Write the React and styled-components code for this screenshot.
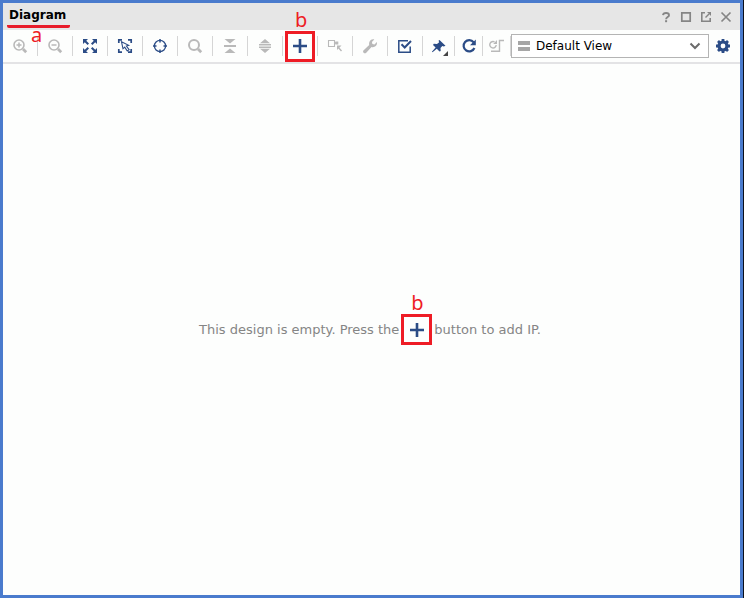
import React from "react";
import styled, { createGlobalStyle } from "styled-components";

const NAVY = "#2b4c86";
const GREY = "#b9b9b9";

const GlobalStyle = createGlobalStyle`
  *, *::before, *::after { box-sizing: border-box; }
  body {
    margin: 0;
    font-family: "DejaVu Sans", sans-serif;
    font-size: 12px;
    color: #000;
    background: #fdfdfd;
  }
`;

const Window = styled.div`
  min-height: 100vh;
  display: flex;
  border-right: 1px solid #0b0f18;
`;

const Panel = styled.main`
  flex: 1;
  min-width: 0;
  display: flex;
  flex-direction: column;
  border: 3px solid #4a7bcd;
  background: #fdfefd;
`;

const TitleBar = styled.header`
  display: flex;
  align-items: flex-start;
  justify-content: space-between;
  height: 27px;
  padding: 0 4px;
  background: #e6e6e6;
`;

const Title = styled.h1`
  position: relative;
  margin: 0;
  padding: 2px 4px 0 2px;
  font-size: 12px;
  line-height: 20px;
  font-weight: 700;
  border-bottom: 3px solid #e81c2a;
  border-radius: 2px;
`;

const WindowButtons = styled.div`
  display: flex;
  align-self: center;
`;

const WindowButton = styled.button`
  display: grid;
  place-items: center;
  width: 20px;
  height: 20px;
  padding: 0;
  border: 0;
  background: none;
  color: #858585;
`;

const Note = styled.span`
  position: absolute;
  left: ${(p) => p.$left}px;
  top: ${(p) => p.$top}px;
  font-family: "Noto Sans", sans-serif;
  font-size: 20px;
  line-height: 24px;
  font-weight: 400;
  color: #ee1c25;
  pointer-events: none;
`;

const Toolbar = styled.div`
  display: flex;
  align-items: center;
  height: 34px;
  border-bottom: 2px solid #e3e3e5;
`;

const ToolCell = styled.div`
  flex: none;
  display: flex;
  align-items: center;
  justify-content: center;
  width: ${(p) => p.$width || 35}px;
  height: 20px;
  border-right: 1px solid #d5d5d5;
`;

const ToolButton = styled.button`
  display: grid;
  place-items: center;
  padding: 0;
  border: 0;
  background: none;
  color: ${(p) => (p.disabled ? GREY : NAVY)};
`;

const MarkedButton = styled(ToolButton)`
  position: relative;
  flex: none;
  width: ${(p) => p.$size}px;
  height: 31px;
  border: 3px solid #ee1c25;
`;

const ViewPicker = styled.label`
  flex: 1;
  min-width: 0;
  display: grid;
  grid-template-columns: 24px 1fr 26px;
  align-items: center;
  justify-items: center;
  height: 24px;
  border: 1px solid #b4b4b4;
  background: #fff;
`;

const ViewSelect = styled.select`
  grid-area: 1 / 1 / 2 / 4;
  justify-self: stretch;
  height: 22px;
  padding: 0 26px 0 24px;
  border: 0;
  appearance: none;
  background: none;
  font: inherit;
  color: #000;
`;

const PickerIcon = styled.span`
  grid-area: 1 / ${(p) => p.$column};
  display: grid;
  pointer-events: none;
`;

const SettingsSlot = styled.div`
  flex: none;
  display: grid;
  place-items: center;
  width: 31px;
  padding-right: 3px;
`;

const Canvas = styled.section`
  flex: 1;
  display: flex;
  align-items: center;
  justify-content: center;
  padding-right: 3px;
  color: #858585;
`;

const Message = styled.p`
  display: flex;
  align-items: center;
  gap: 2px;
  margin: 0;
  font-size: 13px;
  line-height: 16px;
`;

const Icon = ({ children, size = 16 }) => (
  <svg width={size} height={size} viewBox={`0 0 ${size} ${size}`} fill="none" stroke="currentColor" aria-hidden="true">
    {children}
  </svg>
);

const Magnifier = ({ sign }) => (
  <Icon>
    <circle cx="7" cy="7" r="5" strokeWidth={sign ? 1.6 : 2} />
    <path d="M11 11l3.200 3.200" strokeWidth="2.8" />
    {sign && <path d={sign === "+" ? "M4.500 7h5M7 4.500v5" : "M4.500 7h5"} strokeWidth="1.5" />}
  </Icon>
);

const FitIcon = () => (
  <Icon>
    <path d="M1 1h5L1 6zM15 1v5l-5-5zM1 15v-5l5 5zM15 15h-5l5-5z" fill="currentColor" stroke="none" />
    <path d="M3 3l3.300 3.300M13 3L9.700 6.300M3 13l3.300-3.300M13 13L9.700 9.700" strokeWidth="2" />
  </Icon>
);

const FitSelectionIcon = () => (
  <Icon>
    <path d="M1.800 5V1.800H5M11 1.800h3.200V5M14.200 11v3.200H11M5 14.200H1.800V11" strokeWidth="1.7" />
    <path d="M4.500 3.800l1.500 7 1.700-1.600 2.600 3.800 1.800-1.300-2.700-3.600 2.300-.800z" strokeWidth="1.1" />
  </Icon>
);

const TargetIcon = () => (
  <Icon>
    <circle cx="8" cy="8" r="5.600" strokeWidth="1.3" />
    <path d="M8 1v3.500M8 11.500V15M1 8h3.500M11.500 8H15" strokeWidth="1.5" />
  </Icon>
);

const CollapseIcon = () => (
  <Icon>
    <path d="M2.500 1h11L8 5.500zM2.500 15h11L8 10.500z" fill="currentColor" stroke="none" />
    <path d="M2 8h12" strokeWidth="2" />
  </Icon>
);

const ExpandIcon = () => (
  <Icon>
    <path d="M3 5.200h10L8 1zM3 10.800h10L8 15z" fill="currentColor" stroke="none" />
    <path d="M2 6.800h12M2 9.300h12" strokeWidth="1.4" />
  </Icon>
);

const PlusIcon = () => (
  <Icon>
    <path d="M1 8h14M8 1v14" strokeWidth="2.6" />
  </Icon>
);

const ConnectIcon = () => (
  <Icon>
    <path d="M1.500 2.500h6v6h-6z" strokeWidth="1.1" />
    <path d="M7.500 5h2M10.500 8.500l4 4.500" strokeWidth="1.4" />
    <path d="M8.300 3.500h3v3h-3zM10 7.500h4.500L10 12z" fill="currentColor" stroke="none" />
  </Icon>
);

const WrenchIcon = () => (
  <Icon>
    <path d="M1.400 12.500L7.200 7C6.400 3.800 8.800.8 12.300 1.400L9.900 3.900l.5 2.100 2.100.4 2.400-2.400c.8 3.500-2.300 6-5.400 5L4 14.900c-1.500 1.200-3.800-.8-2.600-2.400z" fill="currentColor" stroke="none" />
  </Icon>
);

const ValidateIcon = () => (
  <Icon>
    <path d="M11 2.800H1.800v11.400h11.400V8.500" strokeWidth="1.5" />
    <path d="M4.500 6.300l3.200 3.200L14 3" strokeWidth="2" />
  </Icon>
);

const PinIcon = () => (
  <svg width="20" height="20" viewBox="0 0 20 20" aria-hidden="true">
    <path d="M10.500 4l6 5.800-1.700.8-1.500-.7-1.800 2 .2 3-1.200.7-2.700-2.800-4.300 3.500-.6-.6 3.700-4.300L4 9l.8-1.200 3.200.2 2.200-1.700-.7-1.500z" fill="currentColor" />
    <path d="M19 15v5h-5z" fill="#444" />
  </svg>
);

const RefreshIcon = () => (
  <Icon>
    <path d="M12.600 4.300A5.600 5.600 0 1 0 13.400 10" strokeWidth="2.2" />
    <path d="M14.800 1.500v5.700H9z" fill="currentColor" stroke="none" />
  </Icon>
);

const RerouteIcon = () => (
  <Icon>
    <path d="M5.600 4A3.200 3.200 0 1 0 7.200 7" strokeWidth="1.4" />
    <path d="M8 2v4H4.200z" fill="currentColor" stroke="none" />
    <path d="M15 2.500h-4.500v10.800H2" strokeWidth="1.4" />
  </Icon>
);

const GearIcon = () => (
  <Icon>
    <circle cx="8" cy="8" r="4" strokeWidth="3.2" />
    <path d="M8 1v2.500M8 12.500V15M1 8h2.500M12.500 8H15M3 3l2 2M11 11l2 2M3 13l2-2M11 5l2-2" strokeWidth="2.8" />
  </Icon>
);

const tools = [
  { name: "Zoom in", icon: <Magnifier sign="+" />, disabled: true },
  { name: "Zoom out", icon: <Magnifier sign="-" />, disabled: true },
  { name: "Zoom fit", icon: <FitIcon /> },
  { name: "Zoom to selection", icon: <FitSelectionIcon /> },
  { name: "Center selection", icon: <TargetIcon /> },
  { name: "Search", icon: <Magnifier />, disabled: true },
  { name: "Collapse all", icon: <CollapseIcon />, disabled: true },
  { name: "Expand all", icon: <ExpandIcon />, disabled: true },
  { name: "Add IP", icon: <PlusIcon />, marked: true },
  { name: "Make connection", icon: <ConnectIcon />, disabled: true },
  { name: "Customize block", icon: <WrenchIcon />, disabled: true },
  { name: "Validate design", icon: <ValidateIcon /> },
  { name: "Pin", icon: <PinIcon />, width: 32 },
  { name: "Regenerate layout", icon: <RefreshIcon />, width: 28 },
  { name: "Optimize routing", icon: <RerouteIcon />, disabled: true, width: 28 },
];

const windowButtons = [
  { name: "Help", icon: <><path d="M3 4.200C3.300 1.300 9 1.300 9 4.200c0 1.900-2.900 1.900-2.900 4" strokeWidth="1.9" /><path d="M6.100 9.200v2" strokeWidth="2" /></> },
  { name: "Maximize", icon: <path d="M1.800 1.800h8.400v8.400H1.800z" strokeWidth="1.700" /> },
  { name: "Float", icon: <><path d="M5 1.800H1.800v8.400h8.400V7" strokeWidth="1.600" /><path d="M5.500 6.500L9 3" strokeWidth="1.500" /><path d="M7 1h4v4z" fill="currentColor" stroke="none" /></> },
  { name: "Close", icon: <path d="M1.500 1.500l9 9M10.500 1.500l-9 9" strokeWidth="1.700" /> },
];

function AddButton({ size, noteTop }) {
  return (
    <MarkedButton type="button" aria-label="Add IP" $size={size}>
      <PlusIcon />
      <Note $left={7} $top={noteTop}>b</Note>
    </MarkedButton>
  );
}

export default function App() {
  return (
    <>
      <GlobalStyle />
      <Window>
        <Panel>
          <TitleBar>
            <Title>
              Diagram
              <Note $left={24} $top={20}>a</Note>
            </Title>
            <WindowButtons>
              {windowButtons.map((b) => (
                <WindowButton key={b.name} type="button" aria-label={b.name}>
                  <Icon size={12}>{b.icon}</Icon>
                </WindowButton>
              ))}
            </WindowButtons>
          </TitleBar>
          <Toolbar role="toolbar" aria-label="Diagram tools">
            {tools.map((t) => (
              <ToolCell key={t.name} $width={t.width}>
                {t.marked ? (
                  <AddButton size={30} noteTop={-26} />
                ) : (
                  <ToolButton type="button" aria-label={t.name} disabled={t.disabled}>
                    {t.icon}
                  </ToolButton>
                )}
              </ToolCell>
            ))}
            <ViewPicker>
              <ViewSelect aria-label="View" defaultValue="default">
                <option value="default">Default View</option>
              </ViewSelect>
              <PickerIcon $column={1}>
                <svg width="12" height="10" viewBox="0 0 12 10" aria-hidden="true">
                  <path d="M0 0h12v4H0zM0 6h12v4H0z" fill="#a6a6a6" />
                </svg>
              </PickerIcon>
              <PickerIcon $column={3}>
                <svg width="12" height="8" viewBox="0 0 12 8" fill="none" aria-hidden="true">
                  <path d="M1.500 1.500L6 6l4.500-4.500" stroke="#6b6b6b" strokeWidth="2" />
                </svg>
              </PickerIcon>
            </ViewPicker>
            <SettingsSlot>
              <ToolButton type="button" aria-label="Settings">
                <GearIcon />
              </ToolButton>
            </SettingsSlot>
          </Toolbar>
          <Canvas>
            <Message>
              <span>This design is empty. Press the</span>
              <AddButton size={31} noteTop={-26} />
              <span>button to add IP.</span>
            </Message>
          </Canvas>
        </Panel>
      </Window>
    </>
  );
}
